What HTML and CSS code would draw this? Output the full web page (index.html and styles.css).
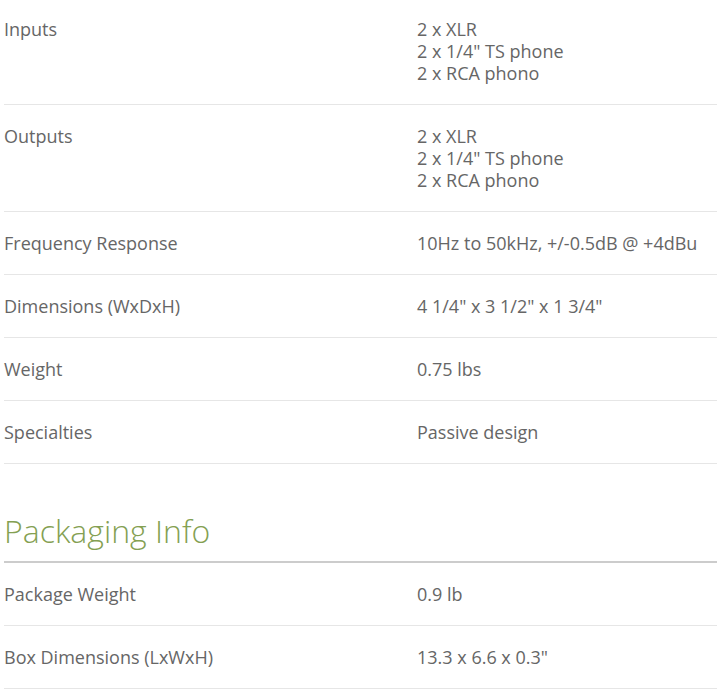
FILE: index.html
```html
<!DOCTYPE html>
<html>
<head>
<meta charset="utf-8">
<link rel="stylesheet" href="styles.css">
</head>
<body>
<div class="specs">
  <div class="row first">
    <div class="label">Inputs</div>
    <div class="value">2 x XLR<br>2 x 1/4" TS phone<br>2 x RCA phono</div>
  </div>
  <div class="row">
    <div class="label">Outputs</div>
    <div class="value">2 x XLR<br>2 x 1/4" TS phone<br>2 x RCA phono</div>
  </div>
  <div class="row">
    <div class="label">Frequency Response</div>
    <div class="value">10Hz to 50kHz, +/-0.5dB @ +4dBu</div>
  </div>
  <div class="row">
    <div class="label">Dimensions (WxDxH)</div>
    <div class="value">4 1/4" x 3 1/2" x 1 3/4"</div>
  </div>
  <div class="row">
    <div class="label">Weight</div>
    <div class="value">0.75 lbs</div>
  </div>
  <div class="row">
    <div class="label">Specialties</div>
    <div class="value">Passive design</div>
  </div>

  <h2 class="section-title">Packaging Info</h2>

  <div class="row">
    <div class="label">Package Weight</div>
    <div class="value">0.9 lb</div>
  </div>
  <div class="row">
    <div class="label">Box Dimensions (LxWxH)</div>
    <div class="value">13.3 x 6.6 x 0.3"</div>
  </div>
</div>
</body>
</html>
```
FILE: styles.css
```css
html, body {
  margin: 0;
  padding: 0;
  background: #ffffff;
}

body {
  font-family: "Open Sans", "Liberation Sans", sans-serif;
  font-size: 18px;
  line-height: 22px;
  color: #666666;
}

.specs {
  margin-left: 4px;
}

.row {
  display: grid;
  grid-template-columns: 413px 1fr;
  padding: 20px 0;
  border-bottom: 1px solid #e6e6e6;
}

.row.first {
  padding-top: 18px;
}

.label,
.value {
  white-space: nowrap;
}

.section-title {
  margin: 44px 0 0 0;
  padding-bottom: 8px;
  border-bottom: 2px solid #cccccc;
  font-size: 32px;
  line-height: 45px;
  font-weight: 300;
  color: #84a052;
}
```
